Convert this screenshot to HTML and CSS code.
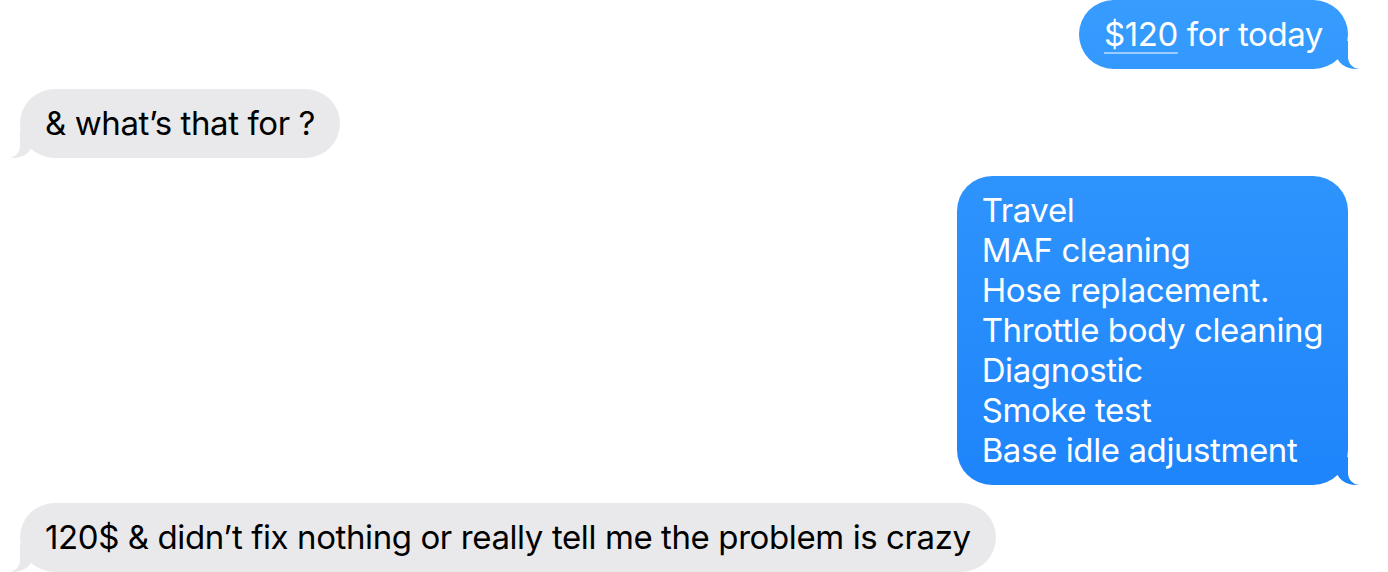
FILE: index.html
```html
<!DOCTYPE html>
<html lang="en">
<head>
  <meta charset="UTF-8">
  <title>Messages</title>
  <link rel="stylesheet" href="styles.css">
</head>
<body>

  <div class="thread">
    <div class="bubble sent"><span class="money">$120</span> for today</div>

    <div class="bubble received">&amp; what’s that for ?</div>

    <div class="bubble sent">Travel<br>MAF cleaning<br>Hose replacement.<br>Throttle body cleaning<br>Diagnostic<br>Smoke test<br>Base idle adjustment</div>

    <div class="bubble received">120$ &amp; didn’t fix nothing or really tell me the problem is crazy</div>
  </div>

</body>
</html>
```

FILE: styles.css
```css
body {
  margin: 0;
  padding: 0;
  background: #ffffff;
  font-family: Inter, "Noto Sans", sans-serif;
  overflow: hidden;
}

.thread {
  display: flex;
  flex-direction: column;
  padding: 0 40px 0 20px;
}

.bubble {
  position: relative;
  font-size: 33px;
  line-height: 40px;
  letter-spacing: -0.4px;
  padding: 14px 25px 15px;
  border-radius: 35px;
  white-space: nowrap;
}

.sent {
  align-self: flex-end;
  color: #ffffff;
  background: linear-gradient(#379cfe, #1a80fa) fixed;
  margin-bottom: 18px;
}

.received {
  align-self: flex-start;
  color: #000000;
  background: #e9e9eb;
  margin-bottom: 18px;
}

.thread .sent:first-child {
  margin-bottom: 20px;
}

/* tails */
.sent::before,
.received::before {
  content: "";
  position: absolute;
  bottom: 0;
  width: 24px;
  height: 28px;
  background: inherit;
}

.sent::after,
.received::after {
  content: "";
  position: absolute;
  bottom: 0;
  width: 26px;
  height: 28px;
  background: #ffffff;
}

.sent::before {
  right: -12px;
  border-bottom-left-radius: 20px 16px;
}

.sent::after {
  right: -26px;
  border-bottom-left-radius: 12px;
}

.received::before {
  left: -11px;
  border-bottom-right-radius: 20px 16px;
}

.received::after {
  left: -26px;
  border-bottom-right-radius: 12px;
}

.money {
  text-decoration: underline;
  text-decoration-color: rgba(255, 255, 255, 0.5);
  text-decoration-thickness: 2px;
  text-underline-offset: 6px;
}
```
